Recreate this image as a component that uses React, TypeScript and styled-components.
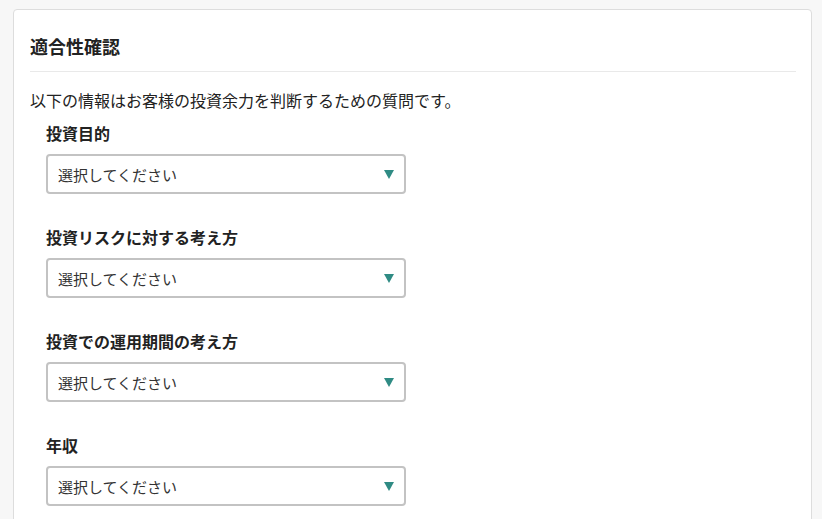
import styled, { createGlobalStyle } from 'styled-components';

const GlobalStyle = createGlobalStyle`
  html, body {
    margin: 0;
    padding: 0;
    background: #f7f7f7;
    font-family: "Noto Sans CJK JP", "Noto Sans", sans-serif;
    color: #222;
  }
`;

const questions = [
  '投資目的',
  '投資リスクに対する考え方',
  '投資での運用期間の考え方',
  '年収',
];

const Card = styled.section`
  margin: 9px 10px 0 13px;
  background: #fff;
  border: 1px solid #dddddd;
  border-radius: 4px;
  padding: 0 15px 40px 16px;
`;

const Title = styled.h2`
  margin: 0;
  padding: 24px 0 13px;
  font-size: 18px;
  line-height: 24px;
  font-weight: 700;
  border-bottom: 1px solid #e9e9e9;
`;

const Intro = styled.p`
  margin: 18px 0 0;
  font-size: 16px;
  line-height: 21px;
`;

const FieldList = styled.div`
  display: flex;
  flex-direction: column;
  gap: 33px;
  margin-top: 12px;
  padding-left: 16px;
`;

const Field = styled.div`
  display: flex;
  flex-direction: column;
`;

const Label = styled.label`
  font-size: 16px;
  line-height: 21px;
  font-weight: 700;
  margin-bottom: 10px;
`;

const SelectBox = styled.div`
  position: relative;
  width: 360px;
  height: 40px;
  box-sizing: border-box;
  border: 2px solid #c3c3c3;
  border-radius: 4px;
  display: flex;
  align-items: center;
  padding: 0 10px;
  font-size: 15px;
  color: #333;
  background: #fff;
`;

const Placeholder = styled.span`
  flex: 1;
`;

const Arrow = styled.span`
  width: 0;
  height: 0;
  border-left: 5px solid transparent;
  border-right: 5px solid transparent;
  border-top: 9px solid #2f8b84;
  margin-right: 0;
`;

export default function App() {
  return (
    <>
      <GlobalStyle />
      <Card>
        <Title>適合性確認</Title>
        <Intro>以下の情報はお客様の投資余力を判断するための質問です。</Intro>
        <FieldList>
          {questions.map((q) => (
            <Field key={q}>
              <Label>{q}</Label>
              <SelectBox>
                <Placeholder>選択してください</Placeholder>
                <Arrow />
              </SelectBox>
            </Field>
          ))}
        </FieldList>
      </Card>
    </>
  );
}
